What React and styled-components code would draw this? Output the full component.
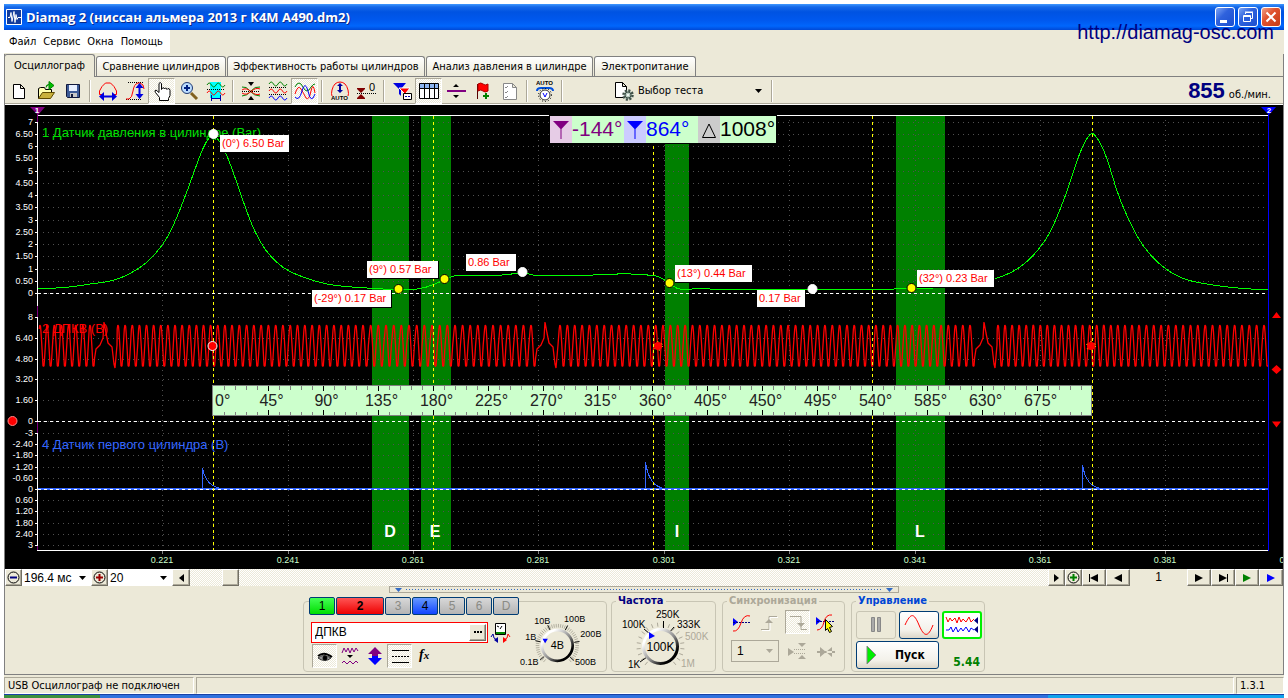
import React from "react";
import styled, { createGlobalStyle, css } from "styled-components";

const GlobalStyle = createGlobalStyle`
  * {
    box-sizing: border-box;
  }

  body {
    margin: 0;
    background: #fff;
    color: #000;
    font-family: "DejaVu Sans Condensed", "Liberation Sans", sans-serif;
    font-size: 11px;
    line-height: 14px;
  }

  button,
  input,
  select {
    font: inherit;
    color: inherit;
    margin: 0;
    padding: 0;
  }
`;

const checker = css`
  background: repeating-conic-gradient(#fff 0 25%, #ece9d8 0 50%) 0 0 / 2px 2px;
`;

const Screen = styled.div`
  padding: 4px 4px 0;
`;

const TitleBar = styled.header`
  position: relative;
  display: flex;
  align-items: center;
  height: 26px;
  padding: 0 3px 0 2px;
  background: linear-gradient(#3f98ff 0, #1668e8 3px, #0053e2 8px, #0058ee 16px, #0066fc 22px, #0049d6 26px);
`;

const Title = styled.h1`
  flex: 1;
  margin: 0 0 0 3px;
  color: #fff;
  font-family: "Open Sans", "Noto Sans", sans-serif;
  font-size: 13px;
  font-weight: 700;
  line-height: 20px;
  text-shadow: 1px 1px #0a2a8c;
`;

const WindowButton = styled.button`
  width: 20px;
  height: 20px;
  margin-left: 3px;
  border: 1px solid #fff;
  border-radius: 3px;
  background: ${({ $close }) =>
    $close
      ? "linear-gradient(135deg, #f0a088, #e0532f 40%, #c63c16)"
      : "linear-gradient(135deg, #7fa6f5, #2f62dd 40%, #1c4fd0)"};

  svg {
    display: block;
  }
`;

const SiteLink = styled.a`
  position: absolute;
  z-index: 2;
  top: 16px;
  right: 10px;
  color: #000080;
  font-family: "Liberation Sans", sans-serif;
  font-size: 20px;
  line-height: 24px;
  text-decoration: none;
`;

const MenuArea = styled.div`
  height: 24px;
  background: #ece9d8;
`;

const Menu = styled.nav`
  display: inline-flex;
  align-items: center;
  gap: 7px;
  height: 23px;
  padding: 0 7px 0 5px;
  background: #fff;

  button {
    border: 0;
    background: none;
  }
`;

const Frame = styled.main`
  border: 1px solid #808080;
  border-top: 0;
  background: #ece9d8;
`;

const TabBar = styled.div`
  display: flex;
  align-items: flex-end;
  gap: 1px;
  height: 23px;
  margin-left: -1px;
  border-bottom: 1px solid #808080;
`;

const Tab = styled.button`
  width: ${({ $width }) => $width}px;
  height: ${({ $active }) => ($active ? 23 : 20)}px;
  margin-bottom: ${({ $active }) => ($active ? -1 : 0)}px;
  border: 1px solid #808080;
  border-bottom: 0;
  border-radius: 3px 3px 0 0;
  background: ${({ $active }) => ($active ? "#ece9d8" : "linear-gradient(#fff, #ece9d8)")};
  white-space: nowrap;
`;

const ToolBar = styled.div`
  display: flex;
  align-items: center;
  height: 28px;
  border-bottom: 1px solid #fff;
  box-shadow: inset 0 -1px #aca899;
`;

const Tool = styled.button`
  display: grid;
  place-items: center;
  width: ${({ $small }) => ($small ? 25 : 27)}px;
  height: ${({ $small }) => ($small ? 24 : 26)}px;
  border: 1px solid transparent;
  background: none;

  ${({ $on }) =>
    $on &&
    css`
      ${checker}
      border-color: #aca899 #fff #fff #aca899;
    `}
`;

const Separator = styled.span`
  width: 2px;
  height: 22px;
  margin: 0 3px;
  border-left: 1px solid #aca899;
  border-right: 1px solid #fff;
`;

const TestMenu = styled.button`
  display: flex;
  align-items: center;
  gap: 2px;
  width: 202px;
  padding: 0 6px 0 46px;
  border: 0;
  background: none;

  span {
    flex: 1;
    text-align: left;
  }
`;

const Speed = styled.div`
  display: flex;
  align-items: baseline;
  gap: 4px;
  margin-left: auto;
  padding-right: 12px;

  strong {
    color: #000080;
    font-family: "Liberation Sans", sans-serif;
    font-size: 22px;
    line-height: 24px;
  }
`;

const Scope = styled.section`
  position: relative;
  background: #000;

  > svg {
    display: block;
    width: 100%;
    height: auto;
  }
`;

const Readout = styled.div`
  position: absolute;
  top: 11px;
  left: 545px;
  display: flex;
  height: 27px;
  outline: 1px solid #000;
  font-family: "Liberation Sans", sans-serif;
  font-size: 21px;
  line-height: 26px;
`;

const ReadoutIcon = styled.span`
  display: grid;
  place-items: center;
  width: 22px;
  background: ${({ $bg }) => $bg};
`;

const ReadoutValue = styled.span`
  width: ${({ $width }) => $width}px;
  background: #ccffcc;
  color: ${({ $color }) => $color};
`;

const TimeBar = styled.div`
  display: flex;
  height: 17px;
`;

const SmallButton = styled.button`
  display: grid;
  place-items: center;
  width: ${({ $width }) => $width || 17}px;
  height: 17px;
  border: 1px solid;
  border-color: #fff #716f64 #716f64 #fff;
  background: #ece9d8;
  box-shadow: inset -1px -1px #aca899;
`;

const Picker = styled.label`
  position: relative;
  width: ${({ $width }) => $width}px;
  height: ${({ $bordered }) => ($bordered ? 22 : 17)}px;
  border: ${({ $bordered }) => ($bordered ? "1px solid #aca899" : "0")};
  background: ${({ $bordered }) => ($bordered ? "#ece9d8" : "#fff")};

  select {
    appearance: none;
    width: 100%;
    height: 100%;
    padding-left: ${({ $bordered }) => ($bordered ? 5 : 2)}px;
    border: 0;
    background: none;
    font-family: "Liberation Sans", sans-serif;
    font-size: 12px;
  }

  svg {
    position: absolute;
    top: 50%;
    right: 5px;
    margin-top: -2px;
    pointer-events: none;
  }
`;

const Track = styled.div`
  flex: 1;
  padding-left: 32px;
  ${checker}
`;

const PageNumber = styled.output`
  width: 57px;
  text-align: center;
  font-family: "Liberation Sans", sans-serif;
  font-size: 12px;
  line-height: 17px;
`;

const Splitter = styled.div`
  display: flex;
  align-items: center;
  justify-content: space-between;
  width: 510px;
  height: 7px;
  margin: 0 auto;
  padding: 0 5px;
  border: 1px solid #aca899;

  &::before {
    order: 1;
    content: "";
    flex: 1;
    height: 1px;
    margin: 0 4px;
    background: repeating-linear-gradient(90deg, #316ac5 0 1px, transparent 1px 3px);
  }

  svg:last-child {
    order: 2;
  }
`;

const Panel = styled.div`
  display: flex;
  justify-content: center;
  align-items: flex-end;
  gap: 6px;
  height: 81px;
  padding-bottom: 2px;
`;

const Group = styled.fieldset`
  width: ${({ $width }) => $width}px;
  height: 77px;
  min-width: 0;
  margin: 0;
  padding: 0 4px;
  border: 1px solid #c8c5b4;
  border-radius: 4px;

  legend {
    padding: 0 2px;
    color: ${({ $color }) => $color};
    font-weight: 700;
    line-height: 12px;
  }
`;

const ChannelGroup = styled(Group)`
  display: flex;
  height: 71px;
  margin-right: -2px;
`;

const ChannelTabs = styled.div`
  display: flex;
  gap: 1px;
  margin-top: -5px;
  background: #ece9d8;
`;

const ChannelTab = styled.button`
  width: ${({ $wide }) => ($wide ? 48 : 26)}px;
  height: 18px;
  border: 1px solid #003c74;
  border-radius: 2px;
  background: ${({ $bg }) => $bg};
  color: ${({ $off }) => ($off ? "#8a8a84" : "#000")};
  font-family: "Liberation Sans", sans-serif;
  font-size: 12px;
  font-weight: ${({ $wide }) => ($wide ? 700 : 400)};
`;

const ChannelSide = styled.div`
  display: flex;
  flex-direction: column;
  width: 212px;
  padding-left: 1px;
`;

const NameRow = styled.div`
  display: flex;
  align-items: center;
  margin-top: 5px;
`;

const ModeRow = styled.div`
  display: flex;
  padding-left: 3px;
`;

const NameField = styled.label`
  display: flex;
  width: 177px;
  height: 21px;
  margin-left: 2px;
  padding: 1px;
  border: 1px solid #f00;
  background: #fff;

  input {
    flex: 1;
    min-width: 0;
    padding-left: 2px;
    border: 0;
    outline: 0;
    font-family: "Liberation Sans", sans-serif;
    font-size: 12px;
  }
`;

const KnobArt = styled.svg`
  display: block;
  font-family: "Liberation Sans", sans-serif;
  font-size: 10px;
`;

const SyncGrid = styled.div`
  display: grid;
  grid-template-columns: 28px 28px 28px 28px;
  grid-template-rows: 26px 32px;
  align-items: center;
  justify-items: center;
  padding-top: 2px;
`;

const SyncChannel = styled.div`
  grid-column: span 2;
  display: flex;
`;

const ControlGrid = styled.div`
  display: grid;
  grid-template-columns: 40px 40px 40px;
  gap: 2px 3px;
  margin-top: 4px;
`;

const XpButton = styled.button`
  display: flex;
  align-items: center;
  justify-content: center;
  height: 28px;
  border: ${({ $lit }) => ($lit ? "2px solid #00f000" : "1px solid #003c74")};
  border-radius: 3px;
  background: ${({ $lit }) => ($lit ? "#fff" : "linear-gradient(#fff, #f3f1ea 70%, #dcd6c8)")};

  &:disabled {
    border-color: #c8c5b4;
    background: #ece9d8;
  }
`;

const StartButton = styled(XpButton)`
  grid-column: span 2;
  justify-content: flex-start;
  gap: 18px;
  padding-left: 9px;
  font-size: 12px;
  font-weight: 700;
`;

const Level = styled.output`
  align-self: end;
  justify-self: end;
  padding-right: 2px;
  color: #008000;
  font-size: 12px;
  font-weight: 700;
`;

const StatusBar = styled.footer`
  display: grid;
  grid-template-columns: 190px 1fr 48px;
  gap: 2px;
  height: 19px;
  padding-top: 2px;
  background: #ece9d8;
`;

const StatusCell = styled.div`
  height: 17px;
  padding-left: 3px;
  border: 1px solid;
  border-color: #aca899 #fff #fff #aca899;
  line-height: 15px;
`;

const TaskStrip = styled.div`
  display: flex;
  height: 4px;
  background: #2f71de;
  border-top: 1px solid #1941a5;

  &::before {
    content: "";
    width: 96px;
    background: #3c8f3c;
  }

  &::after {
    content: "";
    width: 236px;
    margin-left: auto;
    background: #12a3ec;
  }
`;

const Icon = ({ children, w = 24, h = 22 }) => (
  <svg width={w} height={h} viewBox={`0 0 ${w} ${h}`} fill="none" stroke="#000" aria-hidden="true">
    {children}
  </svg>
);

const Caret = ({ color = "#000" }) => (
  <svg width="7" height="4" viewBox="0 0 7 4" aria-hidden="true">
    <path d="M0 0h7L3.5 4z" fill={color} />
  </svg>
);

const wave = (y, a = 3) => `M3 ${y}q2.2 ${-a * 2} 4.5 0t4.5 0t4.5 0t4.5 0`;

const DOTS = "1 1";

const TinyLabel = (props) => (
  <text x="3" fontFamily="Liberation Sans, sans-serif" fontSize="6" fontWeight="700" fill="#000" stroke="none" {...props}>
    AUTO
  </text>
);

const ICONS = {
  new: <path d="M6.5 4.5h7l4 4v10h-11zM13.5 4.500v4h4" fill="#fff" />,
  open: (
    <>
      <path d="M4.5 18.5v-10l2-1h4l1 2h6v3" fill="#ffffb0" />
      <path d="M4.5 18.5l4-6h12l-4 6z" fill="#c9b13c" stroke="#5d4a00" />
      <path d="M12 7.5q0-3 3-3M15 1.5l5 4-5 4z" fill="#00c000" stroke="#008000" />
    </>
  ),
  save: (
    <>
      <path d="M5.5 4.5h13v13h-12l-1-1z" fill="#3c5a96" stroke="#10183c" />
      <path d="M8 5h8v6H8z" fill="#e8f0ff" stroke="none" />
      <path d="M9 13h7v4H9z" fill="#c8c8c8" stroke="none" />
      <path d="M10 14h2v3h-2z" fill="#10183c" stroke="none" />
    </>
  ),
  width: (
    <>
      <path d="M6 14.5H3.5V11L6 6.500 9.5 3h5L18 6.500l2.500 4.500v3.500H18" stroke="red" />
      <path d="M6 16.5h12" stroke="#0000e0" strokeWidth="2" />
      <path d="M8 12v9l-5-4.5zM16 12v9l5-4.5z" fill="#0000e0" stroke="none" />
    </>
  ),
  height: (
    <>
      <path d="M5 2.5h16M3 19.5h16" strokeDasharray={DOTS} />
      <path d="M3 19h3q3-1 4-8t5-8h2q4 1 4 6" stroke="red" />
      <path d="M16.5 5v12" stroke="#0000e0" strokeWidth="2" />
      <path d="M12.500 8l4-5 4 5zM12.5 14l4 5 4-5z" fill="#0000e0" stroke="none" />
    </>
  ),
  hand: (
    <path
      d="M9.5 20.5v-3l-4-5q-1.500-2 .5-2.500l3 2.500V3.500q1-2 2.500 0v6l1-1.500q1.500-1 2 1l1-1q1.500 0 1.500 1.500l1-1q2 0 2 2v5l-1.500 3v2z"
      fill="#fff"
    />
  ),
  zoom: (
    <>
      <path d="M14 13l6 6" stroke="#806020" strokeWidth="3" />
      <circle cx="10" cy="8" r="5.5" fill="#bdf" stroke="#203870" />
      <path d="M7 8h6M10 5v6" stroke="#002080" strokeWidth="2" />
    </>
  ),
  span: (
    <>
      <path d="M6 2h11v16H6z" fill="#00ffff" stroke="none" />
      <path d={wave(5, 2)} stroke="green" />
      <path d="M3 9.5h18" strokeDasharray={DOTS} />
      <path d={wave(13, 2)} stroke="red" />
      <path d="M7.5 15v6M16.5 15v6M8 18.5h9" stroke="#0000a0" />
    </>
  ),
  merge: (
    <>
      <path d="M3 7q4-1 8 4t10 5" stroke="green" />
      <path d="M3 16q5 0 9-5t9-4" stroke="green" />
      <path d="M3 10q4-3 9 1.500t9 2.500M3 13q4 3 9-1.500t9-2.500" stroke="red" />
      <path d="M3 11.5h18" strokeDasharray={DOTS} />
      <path d="M9 2h6l-3 4zM9 20h6l-3-4z" fill="#000" stroke="none" />
    </>
  ),
  three: (
    <>
      <path d={wave(4, 2)} stroke="green" />
      <path d={wave(11, 2)} stroke="red" />
      <path d={wave(18, 2)} stroke="blue" />
      <path d="M3 7.5h18M3 14.5h18" strokeDasharray={DOTS} />
    </>
  ),
  overlap: (
    <>
      <path d="M2 7q4-8 8 0t8 0q2-3 4-3" stroke="green" />
      <path d="M2 14q3-10 6-5t5 9q3 3 5-7t4 2" stroke="red" />
      <path d="M2 17q4 5 7-6t6 0q3 14 7 3" stroke="blue" />
    </>
  ),
  auto: (
    <>
      <path d="M4 16q-1-2 0-6 2-8 8-8t8 8q1 4 0 6" stroke="red" />
      <path d="M12 4v8" stroke="#0000a0" strokeWidth="2" />
      <path d="M9 6l3-3 3 3zM9 10l3 3 3-3z" fill="#0000a0" stroke="none" />
      <TinyLabel y="20" />
    </>
  ),
  zero: (
    <>
      <path d="M2 8.5h8M2 18.5h8" stroke="#800000" />
      <path d="M2 9h8l-4 4zM2 18h8l-4-4z" fill="#800000" stroke="none" />
      <path d="M2 13.5h19" strokeDasharray={DOTS} />
      <text x="14" y="11" fontFamily="Liberation Sans, sans-serif" fontSize="11" fill="#000" stroke="none">0</text>
    </>
  ),
  filter: (
    <>
      <path d="M3 3h13l-5 6v7l-2-2V9z" fill="#0000e0" stroke="none" />
      <path d="M9 8h11l-4 5v7l-2-2v-5z" fill="red" stroke="#fff" />
      <path d="M13.5 13.5h8v6h-8z" fill="#fff" />
      <path d="M15 16.5h2M18 16.5h2" stroke="#0000a0" />
    </>
  ),
  table: (
    <>
      <path d="M2.5 3.5h19v15h-19z" fill="#fff" />
      <path d="M3 4h18v4H3z" fill="#8cb4f0" stroke="none" />
      <path d="M2.5 8.5h19M7.5 4v14M12.5 4v14M17.5 4v14" />
    </>
  ),
  divide: (
    <>
      <path d="M3 11h19" stroke="#800080" strokeWidth="2" />
      <path d="M9 7l3-3 3 3zM9 15l3 3 3-3z" fill="#000" stroke="none" />
    </>
  ),
  flag: (
    <>
      <path d="M6.5 4v15" stroke="#500" />
      <path d="M7 4q3-2 5 0t5 0v7q-3 2-5 0t-5 0z" fill="red" stroke="#a00" />
      <path d="M12 16h6M15 13v6" stroke="green" strokeWidth="2" />
    </>
  ),
  checklist: (
    <>
      <path d="M5.5 3.5h9l4 4v12h-13zM14.5 3.5v4h4" fill="#fff" stroke="#888" />
      <path d="M7 7l1 1 2-2M7 12l1 1 2-2M7 17l1 1 2-2" stroke="#888" />
    </>
  ),
  dial: (
    <>
      <TinyLabel y="5" />
      <path d="M4 11q0-3 4-3h8q4 0 4 3" stroke="#0050e0" strokeWidth="2" />
      <circle cx="12" cy="15" r="6.5" strokeDasharray="1 2" />
      <circle cx="12" cy="15" r="5" fill="#fff" stroke="#333" />
      <path d="M10 13l2 4 2-4" stroke="blue" />
    </>
  ),
  test: (
    <>
      <path d="M3.5 2.5h7l4 4v11h-11zM10.5 2.5v4h4" fill="#fff" />
      <circle cx="16" cy="15" r="4.5" fill="#b8ccc0" stroke="#405048" strokeWidth="2.5" strokeDasharray="2 1.5" />
      <circle cx="16" cy="15" r="3" fill="#b8ccc0" stroke="#405048" />
      <circle cx="16" cy="15" r="1" fill="#fff" stroke="none" />
    </>
  ),
};

const TOOLS = [
  ["new", "open", "save"],
  ["width", "height", "hand", "zoom", "span"],
  ["merge", "three", "overlap"],
  ["auto", "zero"],
  ["filter", "table", "divide", "flag", "checklist"],
  ["dial"],
];

const PRESSED = ["hand", "overlap", "table"];

const TABS = [
  ["Осциллограф", 91],
  ["Сравнение цилиндров", 130],
  ["Эффективность работы цилиндров", 198],
  ["Анализ давления в цилиндре", 167],
  ["Электропитание", 102],
];

/* scope data, in plot coordinates */

const AXES = [
  {
    from: 122,
    to: 306,
    ticks: [
      ["7", 122], ["6.50", 134], ["6", 146], ["5.50", 158], ["5", 171], ["4.50", 183], ["4", 195], ["3.50", 207],
      ["3", 220], ["2.50", 232], ["2", 244], ["1.50", 256], ["1", 269], ["0.50", 281], ["0", 293],
    ],
  },
  { from: 317, to: 422, ticks: [["8", 317], ["6.40", 338], ["4.80", 359], ["3.20", 379], ["1.60", 400], ["0", 421]] },
  {
    from: 433,
    to: 546,
    ticks: [
      ["-3", 433], ["-2.40", 444], ["-1.80", 455], ["-1.20", 467], ["-0.60", 478], ["0", 489],
      ["0.60", 500], ["1.20", 511], ["1.80", 523], ["2.40", 534], ["3", 545],
    ],
  },
];

const TIMES = [
  ["0.221", 162], ["0.241", 288], ["0.261", 413], ["0.281", 538], ["0.301", 664],
  ["0.321", 789], ["0.341", 915], ["0.361", 1040], ["0.381", 1165],
];

const BANDS = [
  ["D", 372, 37, 390],
  ["E", 421, 30, 435],
  ["I", 665, 24, 677],
  ["L", 896, 49, 920],
];

const PRESSURE = [
  [38, 289], [57, 288], [71, 287], [90, 284], [113, 281], [130, 274], [147, 263], [163, 245], [173, 227], [187, 192],
  [200, 155], [207, 140], [213, 134], [219, 140], [227, 155], [237, 183], [250, 221], [260, 242], [270, 256],
  [283, 268], [297, 275], [317, 282], [337, 286], [367, 288], [398, 290], [407, 290], [420, 289], [433, 285],
  [444, 280], [455, 275], [470, 275], [480, 276], [507, 275], [522, 272], [532, 275], [540, 276], [557, 276],
  [573, 275], [613, 275], [622, 273], [640, 275], [655, 275], [663, 279], [669, 283], [677, 289], [687, 290],
  [697, 288], [723, 290], [740, 289], [757, 290], [812, 289], [853, 290], [873, 290], [877, 289], [911, 289],
  [936, 288], [970, 285], [993, 280], [1013, 272], [1027, 262], [1040, 248], [1050, 233], [1060, 210], [1070, 183],
  [1077, 160], [1085, 141], [1091, 133], [1094, 134], [1100, 142], [1107, 158], [1118, 195], [1130, 223],
  [1143, 247], [1163, 268], [1183, 279], [1200, 283], [1233, 288], [1268, 290],
];

const smooth = (pts) => {
  let d = `M${pts[0]}`;
  for (let i = 1; i < pts.length - 1; i++) {
    const [x, y] = pts[i];
    const [nx, ny] = pts[i + 1];
    d += `Q${x} ${y} ${(x + nx) / 2} ${(y + ny) / 2}`;
  }
  return `${d}L${pts[pts.length - 1]}`;
};

// tooth number -> x, per crank revolution; the long tooth sits between them
const TEETH = [
  [[0, 40], [7, 90]],
  [[0, 118], [16, 232], [34, 363], [46, 455], [56, 531]],
  [[0, 560], [39, 847], [56, 970]],
  [[0, 998], [20, 1139], [37, 1264]],
];

const crankPath = () => {
  const pts = [];
  TEETH.forEach((keys, n) => {
    for (let k = 0; k < keys.length - 1; k++) {
      const [i0, x0] = keys[k];
      const [i1, x1] = keys[k + 1];
      const step = (x1 - x0) / (i1 - i0);
      const last = k === keys.length - 2;
      for (let i = 0; i < i1 - i0 + (last ? 1 : 0); i++) {
        const x = x0 + i * step;
        pts.push([x - 0.8, 329], [x - 0.2, 325], [x + 0.5, 326], [x + 1, 332], [x + 1.8, 345], [x + 2.6, 359], [x + 3, 366], [x + 4, 366], [x + 4.6, 358], [x + 5.4, 345]);
      }
    }
    if (n < TEETH.length - 1) {
      const x = keys[keys.length - 1][1];
      pts.pop();
      pts.push([x + 6, 349], [x + 10, 345], [x + 13, 338], [x + 14, 322], [x + 16, 333], [x + 18, 343], [x + 22, 347], [x + 24, 364], [x + 25, 368], [x + 27, 345]);
    }
  });
  return `M${pts.filter(([x]) => x <= 1268).map((p) => p.map((v) => v.toFixed(1)).join(" ")).join("L")}`;
};

const SPIKES = [[202, 468], [645, 462], [1082, 465]];

const CALLOUTS = [
  ["(0°) 6.50 Bar", 220, 135, 69],
  ["(-29°) 0.17 Bar", 312, 290, 79],
  ["(9°) 0.57 Bar", 367, 261, 71],
  ["0.86 Bar", 466, 254, 50],
  ["(13°) 0.44 Bar", 675, 265, 77],
  ["0.17 Bar", 757, 290, 48],
  ["(32°) 0.23 Bar", 917, 270, 77],
];

const MARKERS = [
  [213, 134, "#fff", "#fff"],
  [398, 289, "#ff0", "#000"],
  [444, 279, "#ff0", "#000"],
  [522, 272, "#fff", "#fff"],
  [669, 283, "#ff0", "#000"],
  [812, 289, "#fff", "#fff"],
  [911, 288, "#ff0", "#000"],
  [212, 346, "#f00", "#fff"],
  [12, 421, "#f00", "#f88"],
];

const Ruler = () => {
  const marks = [];
  for (let deg = 9; deg < 720; deg += 9) {
    marks.push({ deg, x: Math.round(213 + (deg * 659) / 540) + 0.5, major: deg % 45 === 0 });
  }
  return (
    <g>
      <rect x="212.5" y="385.5" width="879" height="30" fill="#ccffcc" stroke="#808080" />
      {marks.map(({ deg, x, major }) => (
        <path key={deg} d={major ? `M${x} 386v5M${x} 410v5` : `M${x} 386v4M${x} 412v3`} stroke={major ? "#000" : "#808080"} />
      ))}
      <g fontSize="16" fill="#222">
        <text x="215" y="406">0°</text>
        {marks.filter((m) => m.major).map(({ deg, x }) => (
          <text key={deg} x={x + 3} y="406" textAnchor="middle">{deg}°</text>
        ))}
      </g>
    </g>
  );
};

const Plot = () => (
  <svg viewBox="5 105 1278 464" fontFamily="Liberation Sans, sans-serif" role="img" aria-label="Осциллограмма">
    <g shapeRendering="crispEdges" fill="none">
      {BANDS.map(([name, x, w]) => (
        <rect key={name} x={x} y="116" width={w} height="434" fill="#008000" />
      ))}
      {AXES.flatMap((a) => a.ticks).map(([, y]) => (
        <path key={y} d={`M43 ${y + 0.5}H1268`} stroke="#505050" strokeDasharray="1 4" />
      ))}
      {TIMES.map(([t, x]) => (
        <path key={t} d={`M${x + 0.5} 120V550`} stroke="#505050" strokeDasharray="1 4" />
      ))}
      <path d="M37.5 112V550" stroke="#800080" />
      <path d="M38 115.5H1268M37 550.5H1268" stroke="#fff" />
      {AXES.map((a) => (
        <path key={a.from} d={`M37.5 ${a.from}V${a.to}`} stroke="#fff" />
      ))}
      {AXES.flatMap((a) => a.ticks).map(([, y]) => (
        <path key={y} d={`M35 ${y + 0.5}h3`} stroke="#fff" />
      ))}
      {TIMES.map(([t, x]) => (
        <path key={t} d={`M${x + 0.5} 551v3`} stroke="#808080" />
      ))}
    </g>

    <g fontSize="9" fill="#fff" textAnchor="end">
      {AXES.flatMap((a) => a.ticks).map(([label, y]) => (
        <text key={y} x="33" y={y + 3}>{label}</text>
      ))}
    </g>
    <g fontSize="9" fill="#ccffcc" textAnchor="middle">
      {TIMES.map(([t, x]) => (
        <text key={t} x={x} y="563">{t}</text>
      ))}
      <text x="1282" y="563">0</text>
    </g>

    <g fontSize="13">
      <text x="42" y="137" fill="#00e000">1 Датчик давления в цилиндре (Bar)</text>
      <text x="42" y="333" fill="#f00">2 ДПКВ (В)</text>
      <text x="42" y="449" fill="#3366ff">4 Датчик первого цилиндра (В)</text>
    </g>
    <g fontSize="16" fontWeight="700" fill="#fff" textAnchor="middle">
      {BANDS.map(([name, , , x]) => (
        <text key={name} x={x} y="537">{name}</text>
      ))}
    </g>

    <g shapeRendering="crispEdges" fill="none">
      <path d="M38 293.5H1268M38 421.5H1268" stroke="#fff" strokeDasharray="3 3" />
      <path d="M38 489H1268" stroke="#3366ff" strokeWidth="2" />
      <path d="M38 489.5H1268" stroke="#fff" strokeDasharray="3 3" />
      {SPIKES.map(([x, y]) => (
        <path key={x} d={`M${x + 0.5} 488V${y}Q${x + 4} 487 ${x + 20} 488.5`} stroke="#3366ff" />
      ))}
    </g>
    <path d={crankPath()} fill="none" stroke="#f00" strokeWidth="1.3" strokeLinejoin="bevel" />
    <g shapeRendering="crispEdges" fill="none">
      <path d={smooth(PRESSURE)} stroke="#0f0" />
      {[213, 433, 653, 872, 1092].map((x) => (
        <path key={x} d={`M${x + 0.5} 116V550`} stroke="#ff0" strokeDasharray="3 3" />
      ))}
      <path d="M1268.5 112V551" stroke="#00f" />
    </g>

    <Ruler />

    {MARKERS.map(([x, y, fill, stroke]) => (
      <circle key={x} cx={x + 0.5} cy={y} r="4.5" fill={fill} stroke={stroke} />
    ))}
    {[658, 1091].map((x) => (
      <g key={x}>
        <circle cx={x} cy="346" r="4" fill="#f00" />
        <circle cx={x} cy="346" r="4.5" fill="none" stroke="#ff0" strokeDasharray="1 4" />
      </g>
    ))}
    {CALLOUTS.map(([text, x, y, w]) => (
      <g key={x}>
        <rect x={x} y={y} width={w + 1} height="18" fill="#000" />
        <rect x={x} y={y} width={w} height="17" fill="#fff" />
        <text x={x + 2} y={y + 12} fontSize="11" fill="#f00">{text}</text>
      </g>
    ))}

    <path d="M30 107h15l-7 8z" fill="#800080" />
    <path d="M1261 107h15l-7 8z" fill="#00f" />
    <g fontSize="8" fontWeight="700" fill="#fff" textAnchor="middle">
      <text x="37" y="113">1</text>
      <text x="1269" y="113">2</text>
    </g>
    <path d="M1272 318h9l-4.5-6zM1276.5 365l5 4.5-5 4.5-5-4.500zM1272 421.5h9l-4.5 6z" fill="#f00" />
  </svg>
);

const KnobFace = ({ id, cx, cy, r, label }) => (
  <>
    <defs>
      <linearGradient id={id} x1="0" y1="0" x2="1" y2="1">
        <stop offset="0.2" stopColor="#fff" />
        <stop offset="0.55" stopColor="#888" />
        <stop offset="0.8" stopColor="#000" />
      </linearGradient>
    </defs>
    <circle cx={cx} cy={cy} r={r} fill="#ece9d8" stroke={`url(#${id})`} strokeWidth="3" />
    <text x={cx} y={cy + 4} fontSize="12" textAnchor="middle">{label}</text>
  </>
);

// tick lines round a knob, clockwise from 7 o'clock
const dialTicks = (cx, cy, r1, r2, count, from = 130, to = 410) =>
  Array.from({ length: count }, (_, i) => {
    const a = ((from + ((to - from) * i) / (count - 1)) * Math.PI) / 180;
    return `M${cx + r1 * Math.cos(a)} ${cy + r1 * Math.sin(a)}L${cx + r2 * Math.cos(a)} ${cy + r2 * Math.sin(a)}`;
  }).join("");

const VoltKnob = () => (
  <KnobArt width="92" height="69" viewBox="515 602 92 69">
    <path d={dialTicks(557.5, 646.5, 20, 24, 46)} stroke="#aca899" />
    <path d={dialTicks(557.5, 646.5, 19, 25, 6, 140, 402)} stroke="#000" />
    <KnobFace id="volt" cx={557.5} cy={646.5} r={17} label="4В" />
    <path d="M541 639h6l-3 5z" fill="#00f" />
    <text x="516" y="668">0.1В</text>
    <text x="522" y="640">1В</text>
    <text x="532" y="623">10В</text>
    <text x="565" y="620">100В</text>
    <text x="583" y="637">200В</text>
    <text x="577" y="668">500В</text>
  </KnobArt>
);

const FreqKnob = () => (
  <KnobArt width="94" height="63" viewBox="617 607 94 63">
    <path d={dialTicks(661.5, 646.5, 20, 24, 20)} stroke="#aca899" />
    <path d="M641 662l7-5M645 629l6 5M664.5 621v7M675 627l-5 6" stroke="#000" />
    <KnobFace id="freq" cx={661.5} cy={646.5} r={17} label="100K" />
    <path d="M650 632l6 4-6 3z" fill="#00f" />
    <text x="629" y="668">1K</text>
    <text x="623" y="628">100K</text>
    <text x="657" y="618">250K</text>
    <text x="678" y="628">333K</text>
    <text x="686" y="640" fill="#aca899">500K</text>
    <text x="682" y="667" fill="#aca899">1M</text>
  </KnobArt>
);

const Arrow = ({ left, bar, color = "#000" }) => (
  <svg width="14" height="10" viewBox="0 0 14 10" fill={color} aria-hidden="true">
    <g transform={left ? "matrix(-1 0 0 1 14 0)" : undefined}>
      <path d="M3 1v8l8-4z" />
      {bar && <path d="M11 1h1v8h-1z" />}
    </g>
  </svg>
);

const RoundSign = ({ color, plus }) => (
  <svg width="15" height="15" viewBox="0 0 15 15" fill="none" aria-hidden="true">
    <circle cx="7.5" cy="7.5" r="5.5" stroke="#000" />
    <path d={plus ? "M4 7.5h7M7.5 4v7" : "M4 7.5h7"} stroke={color} strokeWidth="2" />
  </svg>
);

const CHANNELS = [
  ["1", "linear-gradient(#4f5, #0d0)"],
  ["2", "linear-gradient(#f55, #e00)"],
  ["3", null],
  ["4", "linear-gradient(#69f, #14f)"],
  ["5", null],
  ["6", null],
  ["D", null],
];

export default function App() {
  return (
    <>
      <GlobalStyle />
      <Screen>
        <TitleBar>
          <svg width="17" height="17" viewBox="0 0 17 17" aria-hidden="true">
            <path d="M.5.5h15v15H.5z" fill="#123c9c" stroke="#fff" />
            <path d="M2 8.5h2l1-5 1 9 2-10 1 11 1-8 1 5 1-2h3" stroke="#fff" fill="none" />
          </svg>
          <Title>Diamag 2 (ниссан альмера 2013 г К4М A490.dm2)</Title>
          <WindowButton aria-label="Свернуть">
            <svg width="18" height="18"><path d="M4 12h7v3H4z" fill="#fff" /></svg>
          </WindowButton>
          <WindowButton aria-label="Восстановить">
            <svg width="18" height="18" fill="none" stroke="#fff">
              <path d="M6.5 6V4.5h7v6H12M6 4h8" />
              <path d="M4.5 7.5h7v6h-7zM4 8.5h8" />
            </svg>
          </WindowButton>
          <WindowButton $close aria-label="Закрыть">
            <svg width="18" height="18" stroke="#fff" strokeWidth="2"><path d="M4.5 4.5l9 9M13.5 4.5l-9 9" /></svg>
          </WindowButton>
          <SiteLink href="http://diamag-osc.com">http://diamag-osc.com</SiteLink>
        </TitleBar>

        <MenuArea>
          <Menu>
            {["Файл", "Сервис", "Окна", "Помощь"].map((item) => (
              <button key={item}>{item}</button>
            ))}
          </Menu>
        </MenuArea>

        <Frame>
          <TabBar role="tablist">
            {TABS.map(([name, width], i) => (
              <Tab key={name} role="tab" $width={width} $active={i === 0}>{name}</Tab>
            ))}
          </TabBar>

          <ToolBar>
            {TOOLS.map((group) => (
              <React.Fragment key={group[0]}>
                {group.map((name) => (
                  <Tool key={name} $on={PRESSED.includes(name)} aria-label={name}>
                    <Icon>{ICONS[name]}</Icon>
                  </Tool>
                ))}
                <Separator />
              </React.Fragment>
            ))}
            <TestMenu aria-haspopup="menu">
              <Icon>{ICONS.test}</Icon>
              <span>Выбор теста</span>
              <Caret />
            </TestMenu>
            <Separator />
            <Speed>
              <strong>855</strong>об./мин.
            </Speed>
          </ToolBar>

          <Scope>
            <Plot />
            <Readout>
              <ReadoutIcon $bg="#e6cce6">
                <svg width="16" height="20"><path d="M0 1h16l-7.5 8v10h-1V9z" fill="#800080" /></svg>
              </ReadoutIcon>
              <ReadoutValue $width={52} $color="#800080">-144°</ReadoutValue>
              <ReadoutIcon $bg="#ccccff">
                <svg width="16" height="20"><path d="M0 1h16l-7.5 8v10h-1V9z" fill="#00f" /></svg>
              </ReadoutIcon>
              <ReadoutValue $width={52} $color="#00f">864°</ReadoutValue>
              <ReadoutIcon $bg="#ccc">
                <svg width="16" height="20"><path d="M1.5 17.5h13L8 4z" fill="none" stroke="#000" /></svg>
              </ReadoutIcon>
              <ReadoutValue $width={56} $color="#000">1008°</ReadoutValue>
            </Readout>
          </Scope>

          <TimeBar>
            <SmallButton aria-label="Уменьшить развертку"><RoundSign color="#000080" /></SmallButton>
            <Picker $width={69}>
              <select aria-label="Развертка"><option>196.4 мс</option></select>
              <Caret />
            </Picker>
            <SmallButton aria-label="Увеличить развертку"><RoundSign color="#900" plus /></SmallButton>
            <Picker $width={64}>
              <select aria-label="Масштаб"><option>20</option></select>
              <Caret />
            </Picker>
            <SmallButton $width={18} aria-label="Влево">
              <svg width="5" height="8"><path d="M5 0v8L0 4z" /></svg>
            </SmallButton>
            <Track>
              <SmallButton aria-label="Ползунок" />
            </Track>
            <SmallButton aria-label="Вправо">
              <svg width="5" height="8"><path d="M0 0v8l5-4z" /></svg>
            </SmallButton>
            <SmallButton aria-label="Добавить"><RoundSign color="#008000" plus /></SmallButton>
            <SmallButton $width={24} aria-label="Первый кадр"><Arrow left bar /></SmallButton>
            <SmallButton $width={24} aria-label="Предыдущий кадр"><Arrow left /></SmallButton>
            <PageNumber>1</PageNumber>
            <SmallButton $width={24} aria-label="Следующий кадр"><Arrow /></SmallButton>
            <SmallButton $width={24} aria-label="Последний кадр"><Arrow bar /></SmallButton>
            <SmallButton $width={24} aria-label="Воспроизвести"><Arrow color="#008000" /></SmallButton>
            <SmallButton $width={24} aria-label="Воспроизвести все"><Arrow color="#00f" /></SmallButton>
          </TimeBar>

          <Splitter>
            <Caret color="#316ac5" />
            <Caret color="#316ac5" />
          </Splitter>

          <Panel>
            <ChannelGroup $width={304}>
              <ChannelSide>
                <ChannelTabs>
                  {CHANNELS.map(([name, bg]) => (
                    <ChannelTab key={name} $wide={name === "2"} $off={!bg} $bg={bg || "linear-gradient(#d8d8d8, #b4b4b4)"}>
                      {name}
                    </ChannelTab>
                  ))}
                </ChannelTabs>
                <NameRow>
                  <NameField>
                    <input defaultValue="ДПКВ" aria-label="Название канала" />
                    <SmallButton aria-label="Выбрать датчик">
                      <svg width="8" height="2"><path d="M0 0h2v2H0zM3 0h2v2H3zM6 0h2v2H6z" /></svg>
                    </SmallButton>
                  </NameField>
                  <Tool $small aria-label="Датчик">
                    <Icon>
                      <path d="M6.5 2.5h10v11h-10z" fill="#fff" />
                      <path d="M7 11h9v2H7z" fill="#080" stroke="none" />
                      <path d="M8 5l2 1M11 8l2-3" />
                      <path d="M8 19q-4-1-4-6M2 16l2-3" stroke="#0000a0" />
                      <path d="M9 16v6l-4-3z" fill="#0000a0" stroke="none" />
                      <path d="M15 19q4-1 4-6M21 16l-2-3" stroke="red" />
                      <path d="M14 16v6l4-3z" fill="red" stroke="none" />
                    </Icon>
                  </Tool>
                </NameRow>
                <ModeRow>
                  <Tool $small $on aria-label="Показать">
                    <Icon>
                      <path d="M5 13q5-5 13 0-6 5-13 0" fill="#999" stroke="#333" />
                      <path d="M5 11q6-5 14 1" strokeWidth="2" />
                      <circle cx="12" cy="13" r="2" fill="#000" />
                    </Icon>
                  </Tool>
                  <Tool $small aria-label="Сглаживание">
                    <Icon>
                      <path d="M4 8l2-5 2 4 2-4 2 5 2-5 2 4 2-4 2 3" stroke="#800080" />
                      <path d="M9 10h6l-3 3z" fill="#000" stroke="none" />
                      <path d="M4 18l2-2 3 3 3-3 3 3 3-3 2 2" stroke="#800080" />
                    </Icon>
                  </Tool>
                  <Tool $small aria-label="Инвертировать">
                    <Icon>
                      <path d="M5 9l7-7 7 7h-4v2H9V9z" fill="#800080" stroke="none" />
                      <path d="M5 13l7 7 7-7h-4v-2H9v2z" fill="#00f" stroke="none" />
                    </Icon>
                  </Tool>
                  <Tool $small $on aria-label="Нулевая линия">
                    <Icon>
                      <path d="M4 5.5h17M4 17.5h17" />
                      <path d="M4 11.5h17" strokeDasharray="2 1" />
                    </Icon>
                  </Tool>
                  <Tool $small aria-label="Функция">
                    <Icon>
                      <text x="6" y="14" fontFamily="Liberation Serif, serif" fontSize="14" fontStyle="italic" fontWeight="700" fill="#000" stroke="none">
                        f<tspan fontSize="11">x</tspan>
                      </text>
                    </Icon>
                  </Tool>
                </ModeRow>
              </ChannelSide>
              <VoltKnob />
            </ChannelGroup>

            <Group $width={105} $color="#000080">
              <legend>Частота</legend>
              <FreqKnob />
            </Group>

            <Group $width={123} $color="#aca899">
              <legend>Синхронизация</legend>
              <SyncGrid>
                <Tool $small aria-label="Уровень">
                  <Icon>
                    <path d="M3 7l5 4-5 4z" fill="#00f" stroke="none" />
                    <path d="M3 11.5h18" stroke="#000080" strokeDasharray="2 1" />
                    <path d="M3 20q5 1 8-8t9-7" stroke="red" />
                  </Icon>
                </Tool>
                <Tool $small aria-label="Передний фронт">
                  <Icon>
                    <path d="M3 18.5h8V5.5h8" stroke="#aca899" />
                    <path d="M4 19.5h8V6.5h8" stroke="#fff" />
                    <path d="M7 12l4-4 4 4z" fill="#aca899" stroke="none" />
                  </Icon>
                </Tool>
                <Tool $small $on aria-label="Задний фронт">
                  <Icon>
                    <path d="M4 5.5h11v13h6" stroke="#aca899" />
                    <path d="M11 12l4 4 4-4z" fill="#aca899" stroke="none" />
                  </Icon>
                </Tool>
                <Tool $small aria-label="Ручной уровень">
                  <Icon>
                    <path d="M2 6l5 4-5 4z" fill="#00f" stroke="none" />
                    <path d="M3 10.5h18" stroke="#000080" strokeDasharray="2 1" />
                    <path d="M3 19q5 0 7-8t8-7" stroke="red" />
                    <path d="M11.5 8.5l7 7-3 1 2 4-2 1-2-4-2 2z" fill="#ff0" />
                  </Icon>
                </Tool>
                <SyncChannel>
                  <Picker $width={48} $bordered>
                    <select aria-label="Канал синхронизации"><option>1</option></select>
                    <Caret color="#aca899" />
                  </Picker>
                </SyncChannel>
                <Tool $small aria-label="Пределы">
                  <Icon>
                    <path d="M2 8l6 4-6 4zM12 3h8l-4 4zM12 19h8l-4-4z" fill="#aca899" stroke="none" />
                    <path d="M8 9.5h12M8 13.5h12" stroke="#aca899" strokeDasharray={DOTS} />
                  </Icon>
                </Tool>
                <Tool $small aria-label="По центру">
                  <Icon>
                    <path d="M6 7l6 5-6 5zM18 7l-6 5 6 5zM3 11h18v2H3z" fill="#aca899" stroke="none" />
                  </Icon>
                </Tool>
              </SyncGrid>
            </Group>

            <Group $width={134} $color="#0046d5">
              <legend>Управление</legend>
              <ControlGrid>
                <XpButton disabled aria-label="Пауза">
                  <Icon w={12} h={16}><path d="M1.5.5h3v14h-3zM7.5.5h3v14h-3z" fill="#aaa" stroke="#888" /></Icon>
                </XpButton>
                <XpButton aria-label="Один канал">
                  <Icon w={30} h={22}><path d="M1 11C7-2 10-1 15 11S24 24 29 11" stroke="red" /></Icon>
                </XpButton>
                <XpButton $lit aria-label="Все каналы">
                  <Icon w={34} h={20}>
                    <path d="M1 2l2 5 2-4 2 3 3-3 2 5 2-6 2 5 2-3 3 3 3-5 2 5 3-3" stroke="red" />
                    <path d="M1 15h3l2-3 2 5 3-5 2 5 3-4 2 3 3-4 3 5 2-4 3 2" stroke="blue" />
                    <path d="M33 2v7l-4-3.5zM33 11v7l-4-3.5z" fill="#000080" stroke="none" />
                  </Icon>
                </XpButton>
                <StartButton>
                  <svg width="11" height="20"><path d="M1 1v18l9-9z" fill="#0e0" stroke="#888" /></svg>
                  Пуск
                </StartButton>
                <Level>5.44</Level>
              </ControlGrid>
            </Group>
          </Panel>
        </Frame>

        <StatusBar>
          <StatusCell>USB Осциллограф не подключен</StatusCell>
          <StatusCell />
          <StatusCell>1.3.1</StatusCell>
        </StatusBar>
        <TaskStrip />
      </Screen>
    </>
  );
}
